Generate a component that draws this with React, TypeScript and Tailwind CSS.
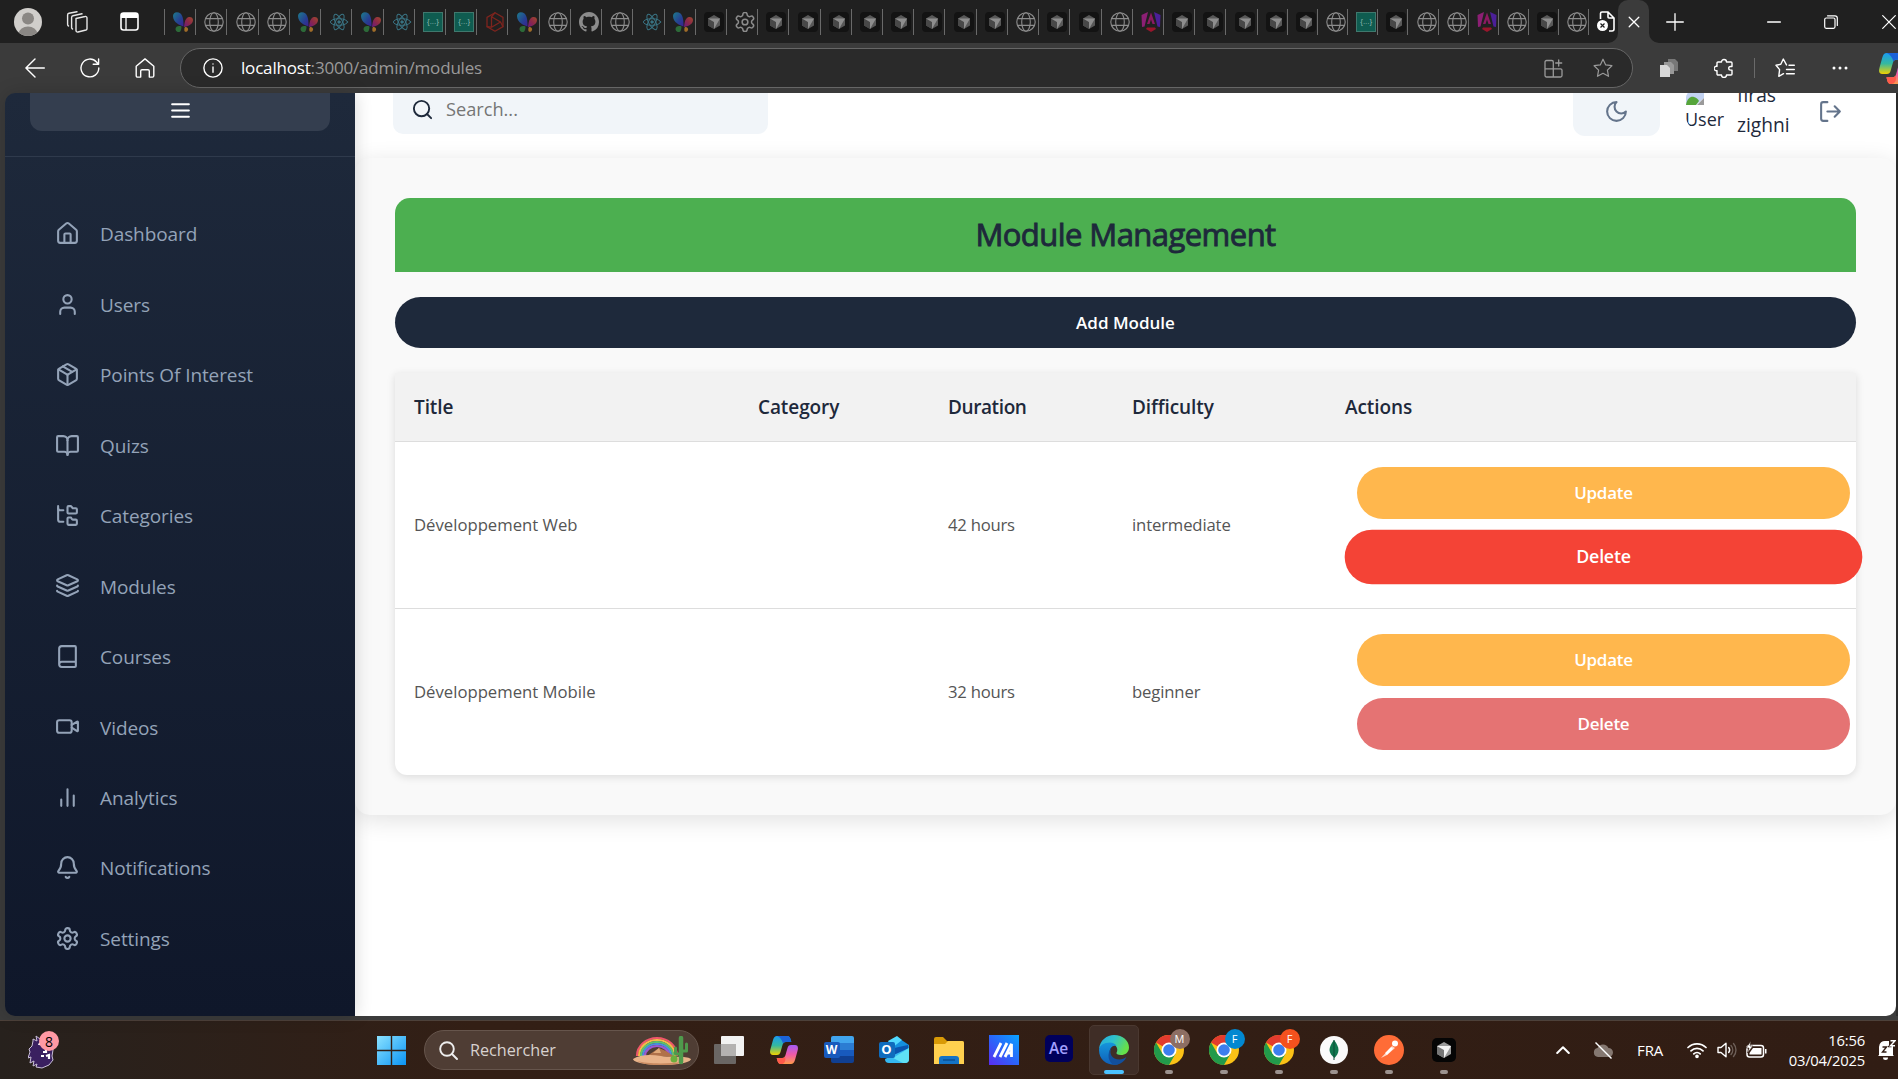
import React from 'react';

type P = { children?: React.ReactNode };

/* ---------- stroke icon base ---------- */
function Ico({ size = 25, w = 2, className = '', vb = '0 0 24 24', children }: P & { size?: number; w?: number; className?: string; vb?: string }) {
  return (
    <svg width={size} height={size} viewBox={vb} fill="none" stroke="currentColor" strokeWidth={w} strokeLinecap="round" strokeLinejoin="round" className={`shrink-0 ${className}`}>
      {children}
    </svg>
  );
}

/* ---------- favicons ---------- */
function Favicon({ kind }: { kind: string }) {
  if (kind === 'g')
    return (
      <Ico size={20} w={1.1} vb="0 0 20 20" className="text-[#8c8c8c]">
        <circle cx="10" cy="10" r="9.2" />
        <ellipse cx="10" cy="10" rx="4.3" ry="9.2" />
        <path d="M1.6 6.6h16.8M1.6 13.4h16.8" />
      </Ico>
    );
  if (kind === 'm')
    return (
      <svg width="20" height="20" viewBox="0 0 20 20" className="shrink-0">
        <defs>
          <linearGradient id="bf1" x1="0" y1="0" x2="1" y2="1"><stop offset="0" stopColor="#1d7c8c" /><stop offset=".6" stopColor="#263f92" /><stop offset="1" stopColor="#3c2090" /></linearGradient>
          <linearGradient id="bf2" x1="1" y1="0" x2="0" y2="1"><stop offset="0" stopColor="#a04a2c" /><stop offset=".5" stopColor="#8c2848" /><stop offset="1" stopColor="#6a1a80" /></linearGradient>
        </defs>
        <path d="M0 4C0 0 4.500-1 7.500 1.500 10.500 4.500 10.500 10 10.500 14.500 7 13.500 0 10.500 0 4Z" fill="url(#bf1)" />
        <path d="M20 8c0-3-4-4-6.500-1.500C11.500 8.500 11.500 12 11 15 14.500 14.500 20 12.500 20 8Z" fill="url(#bf2)" />
        <path d="M8.500 14.500c-3-1-6 0-6 2.500S5 20.500 6.500 20s2-3.500 2-5.500Z" fill="#2c6a38" />
        <path d="M12 15c2-.5 3.500 1 3 3s-3 2.500-3.500 1 0-3.500.5-4Z" fill="#a06c28" />
      </svg>
    );
  if (kind === 'r')
    return (
      <Ico size={20} w={1} vb="0 0 20 20" className="text-[#3a7484]">
        <ellipse cx="10" cy="10" rx="8.600" ry="3.300" />
        <ellipse cx="10" cy="10" rx="8.600" ry="3.300" transform="rotate(60 10 10)" />
        <ellipse cx="10" cy="10" rx="8.600" ry="3.300" transform="rotate(120 10 10)" />
        <circle cx="10" cy="10" r="1.200" fill="currentColor" />
      </Ico>
    );
  if (kind === 'j')
    return (
      <span className="flex size-5 shrink-0 items-center justify-center border border-[#40786d] bg-[#0f5c50] font-['Liberation_Sans'] text-[8px] leading-none text-[#8ab5ad]">
        {'{...}'}
      </span>
    );
  if (kind === 'a')
    return (
      <Ico size={20} w={1.3} vb="0 0 20 20" className="text-[#7c241e]">
        <path d="M10 .8 18 5.400v9.200L10 19.200 2 14.600V5.400Z" />
        <path d="M6.500 4.800 15.500 10 6.500 15.200ZM10 .8 6.500 4.800M18 14.600 15.500 10M2 14.600l4.500.6" />
      </Ico>
    );
  if (kind === 'h')
    return (
      <svg width="20" height="20" viewBox="0 0 16 16" fill="#8c8c8c" className="shrink-0">
        <path d="M8 0C3.580 0 0 3.580 0 8c0 3.540 2.290 6.530 5.470 7.590.4.070.55-.17.55-.38 0-.19-.01-.82-.01-1.490-2.010.37-2.530-.49-2.690-.94-.09-.23-.48-.94-.82-1.130-.28-.15-.68-.52-.01-.53.63-.01 1.080.58 1.230.82.72 1.210 1.870.87 2.330.66.07-.52.28-.87.51-1.070-1.780-.2-3.640-.89-3.640-3.950 0-.87.31-1.590.82-2.150-.08-.2-.36-1.020.08-2.120 0 0 .67-.21 2.200.82.64-.18 1.320-.27 2-.27s1.360.09 2 .27c1.530-1.040 2.200-.82 2.200-.82.44 1.100.16 1.920.08 2.120.51.56.82 1.270.82 2.150 0 3.070-1.870 3.750-3.650 3.950.29.25.54.73.54 1.480 0 1.070-.01 1.930-.01 2.200 0 .21.15.46.55.38A8.010 8.010 0 0 0 16 8c0-4.420-3.580-8-8-8Z" />
      </svg>
    );
  if (kind === 's')
    return (
      <Ico size={20} w={1.600} vb="1.500 1.500 21 21" className="text-[#8c8c8c]">
        <GearPath />
      </Ico>
    );
  if (kind === 'n')
    return (
      <svg width="20" height="20" viewBox="0 0 20 20" className="shrink-0">
        <path d="M.5 3 7 0 3.500 14.500 1 15Z" fill="#8c1f74" />
        <path d="M19.500 3 13 0l3.500 14.500L19 15Z" fill="#4b1f98" />
        <path d="M10 .5 14 12h-2.500L10 7.500 8.500 12H6Z" fill="#8c1a62" />
        <path d="M6 15.500h8l1 1.500-5 3-5-3Z" fill="#98162c" />
      </svg>
    );
  return (
    <svg width="20" height="20" viewBox="0 0 20 20" className="shrink-0">
      <rect width="20" height="20" rx="4" fill="#131313" />
      <path d="M10 3 16 6.500v7L10 17l-6-3.500v-7Z" fill="#585858" />
      <path d="M4 6.500 10 10v7l-6-3.500Z" fill="#484848" />
      <path d="M4 6.500h12L10 17v-7Z" fill="#8e8e8e" />
    </svg>
  );
}

function GearPath() {
  return (
    <>
      <path d="M12.220 2h-.44a2 2 0 0 0-2 2v.18a2 2 0 0 1-1 1.730l-.43.25a2 2 0 0 1-2 0l-.15-.08a2 2 0 0 0-2.730.73l-.22.38a2 2 0 0 0 .73 2.730l.15.1a2 2 0 0 1 1 1.720v.51a2 2 0 0 1-1 1.740l-.15.09a2 2 0 0 0-.73 2.730l.22.38a2 2 0 0 0 2.730.73l.15-.08a2 2 0 0 1 2 0l.43.25a2 2 0 0 1 1 1.730V20a2 2 0 0 0 2 2h.44a2 2 0 0 0 2-2v-.18a2 2 0 0 1 1-1.730l.43-.25a2 2 0 0 1 2 0l.15.08a2 2 0 0 0 2.730-.73l.22-.39a2 2 0 0 0-.73-2.730l-.15-.08a2 2 0 0 1-1-1.740v-.5a2 2 0 0 1 1-1.740l.15-.09a2 2 0 0 0 .73-2.730l-.22-.38a2 2 0 0 0-2.730-.73l-.15.08a2 2 0 0 1-2 0l-.43-.25a2 2 0 0 1-1-1.730V4a2 2 0 0 0-2-2z" />
      <circle cx="12" cy="12" r="3" />
    </>
  );
}

const wideTabs = 'm g g g m r m r j j a m g h g r m c s c c c c c c c c g c c g n c c c'.split(' ');
const narrowTabs = 'c c g j c g g n g c g'.split(' ');

function TabBar() {
  return (
    <div className="flex h-[43px] w-full overflow-hidden bg-[#202020]">
      <div className="flex w-[164px] shrink-0 items-center">
        <svg width="28" height="28" viewBox="0 0 28 28" className="ml-[14px] shrink-0">
          <clipPath id="av"><circle cx="14" cy="14" r="14" /></clipPath>
          <g clipPath="url(#av)">
            <rect width="28" height="28" fill="#d0cecb" />
            <circle cx="14" cy="10.500" r="6" fill="#8a8784" />
            <ellipse cx="14" cy="25" rx="9" ry="6.500" fill="#8a8784" />
          </g>
        </svg>
        <Ico size={22} w={1.400} vb="0 0 22 22" className="ml-[24px] text-[#e6e6e6]">
          <path d="M10 7.500 19 5.500a1.500 1.500 0 0 1 2 1.500v10.500a1.500 1.500 0 0 1-1 1.500l-8 2a1.500 1.500 0 0 1-2-1.500Z" />
          <path d="M6.500 18c-.6-.3-.9-.8-.9-1.500V6.500c0-1 .4-1.500 1.400-1.700L16 2.800M2.500 15c-.6-.3-.9-.8-.9-1.500V4c0-1 .4-1.500 1.400-1.700L11 .8" />
        </Ico>
        <svg width="20" height="20" viewBox="0 0 20 20" className="ml-[32px] shrink-0">
          <rect x="1" y="1" width="17" height="17" rx="2.500" fill="none" stroke="#fff" strokeWidth="1.600" />
          <path d="M1 3a2 2 0 0 1 2-2h13a2 2 0 0 1 2 2v3H1Z" fill="#fff" />
          <path d="M6 6v12" stroke="#fff" strokeWidth="1.300" />
        </svg>
      </div>
      <div className="mt-[9px] h-[26px] w-px shrink-0 bg-[#6a6a6a]" />
      {wideTabs.map((k, i) => (
        <div key={i} className="flex w-[31.230px] shrink-0 items-center justify-end gap-[2px]">
          <Favicon kind={k} />
          <div className="h-[26px] w-px bg-[#6a6a6a]" />
        </div>
      ))}
      {narrowTabs.map((k, i) => (
        <div key={i} className="flex w-[30.150px] shrink-0 items-center justify-end gap-px">
          <Favicon kind={k} />
          <div className="h-[26px] w-px bg-[#6a6a6a]" />
        </div>
      ))}
      <div className="flex w-[29px] shrink-0 items-center justify-center">
        <svg width="18" height="21" viewBox="0 0 18 21" fill="none" className="ml-1">
          <path d="M3.500 8V2.500A1.500 1.500 0 0 1 5 1h6l6 6v11a2 2 0 0 1-2 2h-3M11 1v5a1 1 0 0 0 1 1h5" stroke="#fff" strokeWidth="1.600" />
          <circle cx="5.500" cy="14.500" r="5.500" fill="#fff" />
          <path d="m3.500 12.500 4 4m0-4-4 4" stroke="#202020" strokeWidth="1.200" />
        </svg>
      </div>
      <div className="relative flex w-[31px] shrink-0 items-center justify-center rounded-t-[10px] bg-[#3b3b3b]">
        <Ico size={12} w={1.300} vb="0 0 12 12" className="text-white"><path d="m1.200 1.200 9.600 9.600m0-9.600-9.600 9.600" /></Ico>
        <svg width="10" height="10" viewBox="0 0 10 10" className="absolute bottom-0 -left-[10px]"><path d="M10 0v10H0A10 10 0 0 0 10 0Z" fill="#3b3b3b" /></svg>
        <svg width="10" height="10" viewBox="0 0 10 10" className="absolute -right-[10px] bottom-0"><path d="M0 0v10h10A10 10 0 0 1 0 0Z" fill="#3b3b3b" /></svg>
      </div>
      <div className="flex flex-1 items-center text-white">
        <Ico size={18} w={1.300} vb="0 0 18 18" className="ml-[17px]"><path d="M9 .7v16.600M.7 9h16.600" /></Ico>
        <Ico size={14} w={1.300} vb="0 0 14 14" className="ml-[83px]"><path d="M.6 7h12.800" /></Ico>
        <Ico size={14} w={1.200} vb="0 0 14 14" className="ml-[43px]">
          <rect x=".7" y="3" width="10.300" height="10.300" rx="1.500" />
          <path d="M3.500.8H11A2.300 2.300 0 0 1 13.300 3v7.500" />
        </Ico>
        <Ico size={14} w={1.200} vb="0 0 14 14" className="ml-[44px]"><path d="m.7.7 12.600 12.600m0-12.600L.7 13.300" /></Ico>
      </div>
    </div>
  );
}

function Copilot({ size }: { size: number }) {
  return (
    <svg width={size} height={size} viewBox="0 0 28 28" className="shrink-0">
      <defs>
        <linearGradient id="cp1" x1="0" y1="0" x2="0" y2="1"><stop offset="0" stopColor="#1a9bf0" /><stop offset=".5" stopColor="#34b8a0" /><stop offset="1" stopColor="#f2d200" /></linearGradient>
        <linearGradient id="cp2" x1="0" y1="0" x2="0" y2="1"><stop offset="0" stopColor="#a45cf5" /><stop offset=".5" stopColor="#ee5aa8" /><stop offset="1" stopColor="#ff9a4a" /></linearGradient>
      </defs>
      <path d="M7 0h10c2.500 0 3 1.500 3.500 3l.8 3H16c-2 0-3 1-3.500 3l-2 7c-.6 2-1.500 3-3.500 3H3c-3 0-3.500-2.500-2.500-6l2.500-9C3.800 1.300 5 0 7 0Z" fill="url(#cp1)" />
      <path d="M7 0h10c2.500 0 3 1.500 3.500 3l.8 3H16c-1.500 0-2.300.5-3 1.600C12 4 10 1 7 0Z" fill="#1b62d8" />
      <path d="M21 28H11c-2.500 0-3-1.500-3.500-3l-.8-3H12c2 0 3-1 3.500-3l2-7c.6-2 1.500-3 3.500-3h4c3 0 3.500 2.500 2.500 6l-2.500 9c-.8 2.700-2 4-4 4Z" fill="url(#cp2)" />
      <path d="M11 28c-2.500 0-3-1.500-3.500-3l-.8-3H12c1.500 0 2.300-.5 3-1.600C16 24 15 28 11 28Z" fill="#ff5a4a" />
    </svg>
  );
}

function Toolbar() {
  return (
    <div className="flex h-[50px] w-full items-center overflow-hidden bg-[#3b3b3b] text-white">
      <Ico size={20} w={1.400} vb="0 0 20 20" className="ml-[25px]"><path d="M19.300 10H.9M10 .9.9 10l9.100 9.100" /></Ico>
      <Ico size={20} w={1.400} vb="0 0 20 20" className="ml-[35px]"><path d="M18.800 10a8.900 8.900 0 1 1-2.300-6l2 2.200M18.600.9v5.400h-5.400" /></Ico>
      <Ico size={20} w={1.400} vb="0 0 20 20" className="ml-[35px]"><path d="M1.200 8.200 10 .9l8.800 7.300v9.600a1.300 1.300 0 0 1-1.300 1.300h-3.200V13a1.300 1.300 0 0 0-1.300-1.300H7A1.300 1.300 0 0 0 5.700 13v6.100H2.500a1.300 1.300 0 0 1-1.300-1.300Z" /></Ico>
      <div className="ml-[25px] flex h-10 w-[1453px] shrink-0 items-center rounded-full border border-[#666] bg-[#2a2a2a]">
        <Ico size={20} w={1.400} vb="0 0 20 20" className="ml-[22px]"><circle cx="10" cy="10" r="9.100" /><path d="M10 9v5.200M10 6v.1" /></Ico>
        <div className="ml-[18px] flex-1 text-[17px] tracking-[-0.180px] text-[#9a9a9a]"><span className="text-white">localhost</span>:3000/admin/modules</div>
        <Ico size={19} w={1.300} vb="0 0 19 19" className="text-[#9a9a9a]">
          <path d="M1 9.800V3a1.500 1.500 0 0 1 1.500-1.500h5.300a1.500 1.500 0 0 1 1.500 1.500v6.800M1 9.800h15.500a1.500 1.500 0 0 1 1.500 1.500v5.200a1.500 1.500 0 0 1-1.500 1.500h-14A1.500 1.500 0 0 1 1 16.500ZM9.300 9.800V18M14.700 1v6M11.700 4h6" />
        </Ico>
        <Ico size={20} w={1.200} vb="0 0 20 20" className="mr-[19px] ml-[30px] text-[#9a9a9a]">
          <path d="m10 1.200 2.700 5.700 6.200.8-4.500 4.400 1.100 6.200-5.500-3-5.500 3 1.100-6.200L1.100 7.700l6.200-.8Z" />
        </Ico>
      </div>
      <svg width="18" height="20" viewBox="0 0 18 20" className="ml-[27px] shrink-0">
        <path d="M8 1h7l3 3v9H8Z" fill="#777" /><path d="M4 4h7l3 3v9H4Z" fill="#999" /><path d="M0 7h7l3 3v9H0Z" fill="#d8d8d8" />
      </svg>
      <Ico size={20} w={1.400} vb="0 0 20 20" className="ml-[36px]">
        <path d="M4 4h3.500a2.500 2.500 0 1 1 5 0H17a1 1 0 0 1 1 1v3.500h-1.500a1.800 1.800 0 0 0 0 3.600H18V16a1 1 0 0 1-1 1h-4.500a2.500 2.500 0 1 1-5 0H4a1 1 0 0 1-1-1v-3.400a2.200 2.200 0 1 1 0-4.200V5a1 1 0 0 1 1-1Z" />
      </Ico>
      <div className="ml-[20px] h-5 w-px shrink-0 bg-[#6a6a6a]" />
      <Ico size={20} w={1.400} vb="0 0 20 20" className="ml-[20px]">
        <path d="M11.500 6.900 8.300 1 5.800 6.300 1 7.300l3.600 4.300-.8 6.700 4.700-2.600M14 7.200h5.300M11.500 11.500h7.800M11.500 15.800h7.800" />
      </Ico>
      <svg width="16" height="4" viewBox="0 0 16 4" fill="#fff" className="ml-[37px] shrink-0"><circle cx="2" cy="2" r="1.500" /><circle cx="8" cy="2" r="1.500" /><circle cx="14" cy="2" r="1.500" /></svg>
      <div className="ml-[31px] w-[19px] shrink-0 overflow-hidden"><Copilot size={31} /></div>
    </div>
  );
}

/* ---------- sidebar ---------- */
const nav: { label: string; icon: React.ReactNode }[] = [
  { label: 'Dashboard', icon: <><path d="M15 21v-8a1 1 0 0 0-1-1h-4a1 1 0 0 0-1 1v8" /><path d="M3 10a2 2 0 0 1 .709-1.528l7-5.999a2 2 0 0 1 2.582 0l7 5.999A2 2 0 0 1 21 10v9a2 2 0 0 1-2 2H5a2 2 0 0 1-2-2z" /></> },
  { label: 'Users', icon: <><path d="M19 21v-2a4 4 0 0 0-4-4H9a4 4 0 0 0-4 4v2" /><circle cx="12" cy="7" r="4" /></> },
  { label: 'Points Of Interest', icon: <><path d="M11 21.730a2 2 0 0 0 2 0l7-4A2 2 0 0 0 21 16V8a2 2 0 0 0-1-1.730l-7-4a2 2 0 0 0-2 0l-7 4A2 2 0 0 0 3 8v8a2 2 0 0 0 1 1.730z" /><path d="M12 22V12" /><path d="m3.300 7 7.703 4.734a2 2 0 0 0 1.994 0L20.700 7" /><path d="m7.500 4.270 9 5.150" /></> },
  { label: 'Quizs', icon: <><path d="M12 7v14" /><path d="M3 18a1 1 0 0 1-1-1V4a1 1 0 0 1 1-1h5a4 4 0 0 1 4 4 4 4 0 0 1 4-4h5a1 1 0 0 1 1 1v13a1 1 0 0 1-1 1h-6a3 3 0 0 0-3 3 3 3 0 0 0-3-3z" /></> },
  { label: 'Categories', icon: <><path d="M20 10a1 1 0 0 0 1-1V6a1 1 0 0 0-1-1h-2.500a1 1 0 0 1-.8-.4l-.9-1.200A1 1 0 0 0 15 3h-2a1 1 0 0 0-1 1v5a1 1 0 0 0 1 1Z" /><path d="M20 21a1 1 0 0 0 1-1v-3a1 1 0 0 0-1-1h-2.900a1 1 0 0 1-.88-.55l-.42-.85a1 1 0 0 0-.92-.6H13a1 1 0 0 0-1 1v5a1 1 0 0 0 1 1Z" /><path d="M3 5a2 2 0 0 0 2 2h3" /><path d="M3 3v13a2 2 0 0 0 2 2h3" /></> },
  { label: 'Modules', icon: <><path d="M12.830 2.180a2 2 0 0 0-1.660 0L2.600 6.080a1 1 0 0 0 0 1.830l8.580 3.910a2 2 0 0 0 1.660 0l8.580-3.900a1 1 0 0 0 0-1.830z" /><path d="M2 12a1 1 0 0 0 .58.91l8.600 3.910a2 2 0 0 0 1.650 0l8.580-3.900A1 1 0 0 0 22 12" /><path d="M2 17a1 1 0 0 0 .58.91l8.600 3.910a2 2 0 0 0 1.650 0l8.580-3.900A1 1 0 0 0 22 17" /></> },
  { label: 'Courses', icon: <path d="M4 19.500v-15A2.500 2.500 0 0 1 6.500 2H19a1 1 0 0 1 1 1v18a1 1 0 0 1-1 1H6.500a1 1 0 0 1 0-5H20" /> },
  { label: 'Videos', icon: <><path d="m16 13 5.223 3.482a.5.5 0 0 0 .777-.416V7.870a.5.5 0 0 0-.752-.432L16 10.500" /><rect x="2" y="6" width="14" height="12" rx="2" /></> },
  { label: 'Analytics', icon: <path d="M18 20V10M12 20V4M6 20v-6" /> },
  { label: 'Notifications', icon: <><path d="M10.268 21a2 2 0 0 0 3.464 0" /><path d="M3.262 15.326A1 1 0 0 0 4 17h16a1 1 0 0 0 .74-1.673C19.410 13.956 18 12.499 18 8A6 6 0 0 0 6 8c0 4.499-1.411 5.956-2.738 7.326" /></> },
  { label: 'Settings', icon: <GearPath /> },
];

function Sidebar() {
  return (
    <aside className="relative z-10 flex w-[350px] shrink-0 flex-col rounded-l-[10px] bg-linear-to-b from-[#1e293b] to-[#0f172a] shadow-[0_0_18px_rgba(0,0,0,0.16)]">
      <div className="flex h-[64px] shrink-0 items-start border-b border-[#2f3a4c] px-[25px]">
        <div className="flex h-[38px] w-full items-center justify-center rounded-b-[12px] bg-[#343e4f] text-white">
          <Ico size={25} className="-mt-[3px]"><path d="M4 6h16M4 12h16M4 18h16" /></Ico>
        </div>
      </div>
      <nav className="mt-[42px] flex flex-col">
        {nav.map((n) => (
          <div key={n.label} className="flex h-[70.450px] items-center pl-[50px] text-[19px] tracking-[-0.100px] text-[#94a3b8]">
            <Ico size={25} className="-mt-px">{n.icon}</Ico>
            <span className="mt-px ml-[20px] whitespace-nowrap">{n.label}</span>
          </div>
        ))}
      </nav>
    </aside>
  );
}

/* ---------- main ---------- */
function Header() {
  return (
    <div className="flex h-[65px] shrink-0 items-start overflow-hidden bg-white pl-[38px]">
      <div className="flex h-[41px] w-[375px] shrink-0 items-center rounded-b-[10px] bg-[#f1f5f9]">
        <Ico size={23} className="-mt-2 ml-[18px] text-[#1e293b]"><circle cx="11" cy="11" r="8" /><path d="m21 21-4.300-4.300" /></Ico>
        <span className="-mt-[7px] ml-[12px] text-[18.200px] text-[#757575]">Search...</span>
      </div>
      <div className="ml-[805px] flex h-[43px] w-[87px] shrink-0 justify-center rounded-b-[12px] bg-[#f1f5f9] pt-[6px] text-[#64748b]">
        <Ico size={25}><path d="M12 3a6 6 0 0 0 9 9 9 9 0 1 1-9-9Z" /></Ico>
      </div>
      <div className="-mt-[10px] ml-[25px] h-[50px] w-10 shrink-0 overflow-hidden rounded-full text-[18px] leading-[29px] text-[#1e293b]">
        <svg width="20" height="22" viewBox="0 0 20 22" className="block">
          <path d="M1 0h18v15L11 22H1Z" fill="#c3d3f2" />
          <path d="M1 22c1-7 5-9 8-8s4 2 5 4l-3 4Z" fill="#56a53a" />
          <path d="M19 15v7h-7Z" fill="#9a9a9a" />
        </svg>
        <span className="block">User</span>
      </div>
      <div className="-mt-[13px] ml-[12px] w-[68px] shrink-0 text-[19.200px] leading-[30px] text-[#1e293b]">firas<br />zighni</div>
      <Ico size={25} className="mt-[6px] ml-[13px] text-[#64748b]"><path d="M9 21H5a2 2 0 0 1-2-2V5a2 2 0 0 1 2-2h4M16 17l5-5-5-5M21 12H9" /></Ico>
    </div>
  );
}

const cols = 'grid grid-cols-[344px_190px_184px_213px_1fr] pl-[19px]';
const btn = 'flex items-center justify-center rounded-full text-[17px] font-semibold tracking-[-0.250px] text-white';

function Row({ title, hours, level, last }: { title: string; hours: string; level: string; last?: boolean }) {
  return (
    <div className={`${cols} items-center text-[16.700px] text-[#555] ${last ? 'h-[166px]' : 'h-[167px] border-b border-[#ddd]'}`}>
      <span>{title}</span>
      <span />
      <span className="tracking-[-0.250px]">{hours}</span>
      <span className="tracking-[-0.150px]">{level}</span>
      <div className="ml-[12px] flex w-[493px] flex-col gap-[12px] justify-self-start">
        <div className={`${btn} h-[52px] bg-[#ffb74d]`}>Update</div>
        <div className={last ? `${btn} h-[52px] bg-[#e57373]` : `${btn} h-[52px] scale-105 bg-[#f44336]`}>Delete</div>
      </div>
    </div>
  );
}

function Main() {
  return (
    <main className="flex w-[1541px] shrink-0 flex-col overflow-hidden rounded-br-[10px] bg-white">
      <Header />
      <section className="flex h-[657px] shrink-0 flex-col rounded-[15px] bg-[#f9f9f9] px-10 pt-10 shadow-[0_5px_25px_rgba(0,0,0,0.12)]">
        <h1 className="flex h-[74px] shrink-0 items-center justify-center rounded-t-[15px] bg-[#4caf50] pb-[2px] text-[31px] tracking-[-0.550px] text-[#1e293b] [-webkit-text-stroke:0.9px_#1e293b]">Module Management</h1>
        <div className="mt-[25px] flex h-[51px] shrink-0 items-center justify-center rounded-full bg-[#1e293b] text-[17px] font-semibold text-white">Add Module</div>
        <div className="mt-[25px] rounded-b-[12px] bg-white shadow-[0_2px_8px_rgba(0,0,0,0.12)]">
          <div className={`${cols} h-[69px] items-center border-b border-[#ddd] bg-[#f2f2f2] text-[19px] font-semibold tracking-[-0.100px] text-[#1e293b]`}>
            <span>Title</span><span>Category</span><span className="tracking-[-0.400px]">Duration</span><span>Difficulty</span><span>Actions</span>
          </div>
          <Row title="Développement Web" hours="42 hours" level="intermediate" />
          <Row title="Développement Mobile" hours="32 hours" level="beginner" last />
        </div>
      </section>
    </main>
  );
}

/* ---------- taskbar ---------- */
function Chrome({ letter, color }: { letter: string; color: string }) {
  return (
    <div className="relative">
      <svg width="30" height="30" viewBox="0 0 30 30">
        <circle cx="15" cy="15" r="15" fill="#fbc116" />
        <path d="M15 15 2 7.500A15 15 0 0 1 28 7.500L15 8Z" fill="#e33b2e" />
        <path d="M2 7.500A15 15 0 0 0 15 30l6.500-11.300L8.500 18.800Z" fill="#229a4b" />
        <circle cx="15" cy="15" r="7.500" fill="#fff" />
        <circle cx="15" cy="15" r="5.800" fill="#3d7eee" />
      </svg>
      <span className={`absolute -top-[6px] left-[16px] flex size-5 items-center justify-center rounded-full text-[11px] text-white ${color}`}>{letter}</span>
    </div>
  );
}

function Slot({ children, dot, active }: P & { dot?: boolean; active?: boolean }) {
  return (
    <div className="flex w-[55px] shrink-0 justify-center">
      <div className={`flex h-[50px] w-[50px] flex-col items-center rounded-[5px] ${active ? 'border border-[#4a3830] bg-[#3f2d26]' : 'border border-transparent'}`}>
        <div className="flex h-[48px] items-center justify-center">{children}</div>
        {dot && <div className={`-mt-[4px] h-[4px] shrink-0 rounded-full ${active ? 'w-5 bg-[#4cc2ff]' : 'w-2 bg-[#9c928e]'}`} />}
      </div>
    </div>
  );
}

function Taskbar() {
  return (
    <footer className="flex h-[59px] w-full items-center overflow-hidden border-t border-[#4d413a] bg-linear-to-r from-[#27211d] via-[#331f15] via-25% to-[#311d14]">
      <div className="relative ml-[28px] h-[38px] w-[32px] shrink-0">
        <svg width="26" height="38" viewBox="0 0 26 38" className="block">
          <path d="M5 8 9 10 8 5l4 3 3-5 2 5 4 1 2 6 2 4-1 6 1 4-4 5-7 3-6-1 1-3-4 2 1-5-4 2 1-6-3 1 2-6-1-3 3-3 1-5Z" fill="#3a2060" stroke="#c9bfd8" strokeWidth="1" />
          <path d="M11 14c1-3 5-3 5 0M15 21h3v-3M18 25l3-1v4M13 25h3" stroke="#fff" strokeWidth="2.200" fill="none" />
        </svg>
        <span className="absolute top-0 left-[11px] flex size-5 items-center justify-center rounded-full bg-[#ff99a4] text-[14px] text-black">8</span>
      </div>
      <svg width="29" height="29" viewBox="0 0 29 29" className="ml-[317px] shrink-0">
        <defs><linearGradient id="win" x1="0" y1="0" x2="1" y2="1"><stop offset="0" stopColor="#8be2ff" /><stop offset="1" stopColor="#0a94f5" /></linearGradient></defs>
        <path d="M0 0h13.800v13.800H0ZM15.200 0H29v13.800H15.200ZM0 15.200h13.800V29H0ZM15.200 15.200H29V29H15.200Z" fill="url(#win)" />
      </svg>
      <div className="ml-[18px] flex h-10 w-[275px] shrink-0 items-center rounded-full border border-[#66554c] bg-[#4f3d34]">
        <Ico size={19} w={1.900} vb="0 0 19 19" className="ml-[14px] text-[#eee]"><circle cx="8" cy="8" r="6.800" /><path d="m13 13 5 5" /></Ico>
        <span className="ml-[12px] flex-1 text-[16.200px] text-[#d8d2cf]">Rechercher</span>
        <svg width="58" height="29" viewBox="0 0 58 29" className="mr-[7px] shrink-0">
          <g fill="none" strokeWidth="2.200">
            <path d="M4 20a20 18 0 0 1 40 0" stroke="#f0566a" /><path d="M6 20a18 16 0 0 1 36 0" stroke="#f7b84a" /><path d="M8 20a16 14 0 0 1 32 0" stroke="#5fc46a" /><path d="M10 20a14 12 0 0 1 28 0" stroke="#4a90e0" /><path d="M12 20a12 10 0 0 1 24 0" stroke="#9a5ad0" />
          </g>
          <path d="M14 20 26 12l7 3 9 6Z" fill="#b0714a" /><path d="m20 17 6-5 2 5Z" fill="#e0a878" />
          <path d="M0 23c6-4 16-5 28-3s24-1 30 3c0 3-12 6-29 6S0 26 0 23Z" fill="#e9b38a" />
          <path d="M4 25c10 3 30 3 46 1-8 4-36 5-46-1Z" fill="#c98a60" />
          <path d="M48 26V2" stroke="#4f9a4c" strokeWidth="4.500" strokeLinecap="round" fill="none" />
          <path d="M48 18h-5.500v-6M48 15h5.500V8" stroke="#4f9a4c" strokeWidth="3" strokeLinecap="round" strokeLinejoin="round" fill="none" />
          <circle cx="41" cy="23" r="3.500" fill="#6cae3c" />
        </svg>
      </div>
      <div className="ml-[2px] flex shrink-0">
        <Slot>
          <svg width="30" height="28" viewBox="0 0 30 28"><rect x="7" width="23" height="20" rx="1" fill="#f2f2f2" /><rect y="8" width="22" height="20" rx="1" fill="#6a6664" /><rect x="7" y="8" width="15" height="12" fill="#b4b2b1" /></svg>
        </Slot>
        <Slot><Copilot size={28} /></Slot>
        <Slot>
          <div className="relative h-[28px] w-[30px]">
            <div className="ml-[7px] grid h-[27px] w-[23px] grid-rows-4 overflow-hidden rounded-[2px]"><i className="bg-[#41a5ee]" /><i className="bg-[#2b7cd3]" /><i className="bg-[#185abd]" /><i className="bg-[#103f91]" /></div>
            <span className="absolute top-[6px] left-0 flex size-4 items-center justify-center rounded-[2px] bg-[#185abd] text-[12px] font-bold text-white">W</span>
          </div>
        </Slot>
        <Slot>
          <div className="relative h-[28px] w-[30px]">
            <svg width="30" height="28" viewBox="0 0 30 28" className="block"><path d="M6 9 18 1l12 8v7L10 20Z" fill="#1490df" /><path d="M9 5 18 0l5 4-10 8Z" fill="#50d9ff" /><path d="M6 14 29 9v5l-14 9Z" fill="#0a55b0" /><path d="M30 12v11a4 4 0 0 1-4 4H10a4 4 0 0 1-4-4Z" fill="#35b8f1" /><path d="m30 12-16 10 10 5h2a4 4 0 0 0 4-4Z" fill="#5fe0f5" /></svg>
            <span className="absolute top-[6px] left-0 flex size-[16px] items-center justify-center rounded-[2px] bg-[#0f6cbd] text-[13px] font-bold text-white">O</span>
          </div>
        </Slot>
        <Slot>
          <svg width="30" height="27" viewBox="0 0 30 27"><path d="M0 2a2 2 0 0 1 2-2h7l4 4h15a2 2 0 0 1 2 2v6H0Z" fill="#d99a06" /><path d="M0 7h11l3-3h14a2 2 0 0 1 2 2v21H0Z" fill="#ffd04f" /><path d="M5 27v-5a3 3 0 0 1 3-3h14a3 3 0 0 1 3 3v5Z" fill="#1473c6" /><path d="M9 23h12" stroke="#0a4f94" strokeWidth="1.500" /></svg>
        </Slot>
        <Slot>
          <svg width="30" height="30" viewBox="0 0 30 30">
            <defs><linearGradient id="asus" x1="0" y1="1" x2="1" y2="0"><stop offset="0" stopColor="#5b2cf0" /><stop offset=".5" stopColor="#2a66fa" /><stop offset="1" stopColor="#08a4ff" /></linearGradient></defs>
            <rect width="30" height="30" fill="url(#asus)" /><path d="M5 22 12 8M11 22l7-14M16 22l6.500-13v13M22 18h-3.500" stroke="#fff" strokeWidth="2.800" fill="none" />
          </svg>
        </Slot>
        <Slot><div className="mb-[3px] flex h-[27px] w-[28px] items-center justify-center rounded-[5px] bg-[#00005b] text-[15.500px] font-semibold text-[#a3a0ff]">Ae</div></Slot>
        <Slot dot active>
          <svg width="30" height="30" viewBox="0 0 30 30">
            <defs>
              <linearGradient id="e1" x1="0" y1="0" x2="1" y2="0.400"><stop offset="0" stopColor="#24a8e0" /><stop offset=".5" stopColor="#2fc2cc" /><stop offset="1" stopColor="#66e04a" /></linearGradient>
              <linearGradient id="e2" x1="0" y1="0" x2="0" y2="1"><stop offset="0" stopColor="#1596dc" /><stop offset="1" stopColor="#0f5fb8" /></linearGradient>
            </defs>
            <path d="M0 14C1 5 8 0 15 0c9 0 15 6 15 12.500 0 5-4 7.500-8 7.500-3.500 0-5-1.200-4.500-2.300 2-3 .5-8.700-6-8.700C6 9 1.500 11.500 0 14Z" fill="url(#e1)" />
            <path d="M0 15c0-4.500 5-7.500 11-7.500 3 0 5.500 1.500 6.500 3.500-5-1.500-8 4-6.500 9s5.500 9 10 8.500C13 32 0 28 0 15Z" fill="url(#e2)" />
            <path d="M12.500 13c-3 5 .5 11.500 8 11.500 2.500 0 5-1 6.800-2.500C26 26 21 30 15.500 30 9 28 7.500 18 12.500 13Z" fill="#124f9c" />
          </svg>
        </Slot>
        <Slot dot><Chrome letter="M" color="bg-[#8d6e63]" /></Slot>
        <Slot dot><Chrome letter="F" color="bg-[#0288d1]" /></Slot>
        <Slot dot><Chrome letter="F" color="bg-[#f4511e]" /></Slot>
        <Slot dot>
          <svg width="28" height="28" viewBox="0 0 28 28"><circle cx="14" cy="14" r="14" fill="#fafafa" /><path d="M14 4c3 4 4.500 7 4.500 10s-2 6-4 8c-2.500-2-5-5-5-8S11 8 14 4Z" fill="#10774e" /><path d="M14 4v20" stroke="#0a4a35" strokeWidth="1" /></svg>
        </Slot>
        <Slot dot>
          <svg width="30" height="30" viewBox="0 0 30 30"><circle cx="15" cy="15" r="15" fill="#ff6c37" /><path d="M7 23 18 11l3 2-8 7Z" fill="#ffd9cb" /><path d="m12 19 6-6" stroke="#fff" strokeWidth="2.500" /><circle cx="21" cy="8.500" r="3" fill="#fff" /></svg>
        </Slot>
        <Slot dot>
          <svg width="24" height="24" viewBox="0 0 24 24"><rect width="24" height="24" rx="5" fill="#050505" /><path d="M12 4 19 8v8l-7 4-7-4V8Z" fill="#9a9a9a" /><path d="m5 8 7 4v8l-7-4Z" fill="#777" /><path d="M5 8h14l-7 12v-8Z" fill="#f3f3f3" /></svg>
        </Slot>
      </div>
      <div className="flex flex-1 items-center text-white">
        <Ico size={14} w={2} vb="0 0 14 14" className="ml-[85px]"><path d="m1.200 10 5.800-5.800L12.800 10" /></Ico>
        <svg width="20" height="17" viewBox="0 0 20 17" className="ml-[23px] shrink-0"><path d="M5 15a4.500 4.500 0 0 1-.5-8.900A6 6 0 0 1 15.500 6 4.500 4.500 0 0 1 15.500 15Z" fill="#857871" /><path d="m2.500.5 16 16" stroke="#fff" strokeWidth="1.400" /></svg>
        <span className="ml-[24px] text-[15px] tracking-[-0.100px]">FRA</span>
        <Ico size={20} w={1.700} vb="0 0 20 20" className="ml-[24px]"><path d="M1 7.500a12.800 12.800 0 0 1 18 0M4 10.800a8.500 8.500 0 0 1 12 0M6.800 13.800a4.600 4.600 0 0 1 6.400 0" /><circle cx="10" cy="16.300" r="1" fill="currentColor" /></Ico>
        <Ico size={20} w={1.400} vb="0 0 20 20" className="ml-[10px]"><path d="M1 7.500v5h3l5 4.200V3.300L4 7.500ZM11.700 7.500c1.200 1.500 1.200 3.500 0 5" /><path d="M14 5.500c2.300 2.600 2.300 6.400 0 9M16.500 3.500c3.300 3.800 3.300 9.200 0 13" stroke="#6d5f58" /></Ico>
        <svg width="21" height="18" viewBox="0 0 21 18" className="ml-[9px] shrink-0"><rect x="1" y="4.500" width="16.500" height="11.500" rx="2.500" fill="none" stroke="#fff" strokeWidth="1.500" /><path d="M7 7h8.500v6.500H3.500V12ZM19 8h1.500v4.500H19Z" fill="#fff" /><path d="M5 0 0 7h3l-1.500 5L7 5H4Z" fill="#fff" stroke="#311d14" strokeWidth=".6" /></svg>
        <div className="ml-auto text-right text-[14.800px] leading-[20px] tracking-[-0.220px]">16:56<br />03/04/2025</div>
        <svg width="19" height="20" viewBox="0 0 19 20" className="mr-[2px] ml-[12px] shrink-0"><path d="M2 15V7a6 6 0 0 1 7-6h3v5h4v9l1 1H1Z" fill="#fff" /><path d="M6 17.500h5a2.500 2.500 0 0 1-5 0Z" fill="#fff" /><path d="M5.500 7h4l-4 5h4M11 6.500h3.500" stroke="#311d14" strokeWidth="1.400" fill="none" /><path d="M13.500.8h4.500l-4.500 5H18" stroke="#fff" strokeWidth="1.400" fill="none" /></svg>
      </div>
    </footer>
  );
}

export default function App() {
  return (
    <div className="flex h-[1079px] w-[1898px] flex-col overflow-hidden bg-[#3b3b3b] font-['Open_Sans',sans-serif] text-white">
      <TabBar />
      <Toolbar />
      <div className="flex h-[923px] shrink-0 pl-[5px]">
        <Sidebar />
        <Main />
        <div className="w-[2px] shrink-0 bg-[#2b2b2b]" />
      </div>
      <div className="h-[4px] shrink-0" />
      <Taskbar />
    </div>
  );
}
